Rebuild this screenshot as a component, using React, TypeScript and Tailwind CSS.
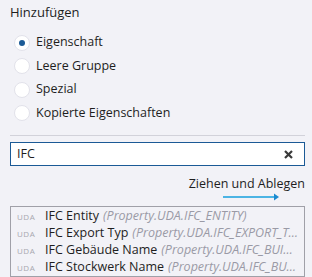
import { useState } from 'react';

const options = ['Eigenschaft', 'Leere Gruppe', 'Spezial', 'Kopierte Eigenschaften'];

const items = [
  { name: 'IFC Entity', path: '(Property.UDA.IFC_ENTITY)' },
  { name: 'IFC Export Typ', path: '(Property.UDA.IFC_EXPORT_TYPE)' },
  { name: 'IFC Gebäude Name', path: '(Property.UDA.IFC_BUILDING_NAME)' },
  { name: 'IFC Stockwerk Name', path: '(Property.UDA.IFC_BUILDING_STOREY)' },
];

export default function App() {
  const [selected, setSelected] = useState(0);
  const [query, setQuery] = useState('IFC');

  return (
    <div
      className="h-[277px] w-[312px] overflow-hidden bg-[#f2f2f7] pl-[10px] pr-[7px] pt-[3px] text-[#1e1e1e]"
      style={{ fontFamily: '"Open Sans", "Noto Sans", sans-serif' }}
    >
      <div className="text-[13px] leading-[18px]">Hinzufügen</div>

      <div className="mt-[10px] flex flex-col">
        {options.map((label, i) => (
          <label key={label} className="flex h-[23.5px] cursor-pointer items-center gap-[6px] pl-[4px]">
            <span
              className="flex h-[16px] w-[16px] items-center justify-center rounded-full border border-[#e2e2ea] bg-white"
              onClick={() => setSelected(i)}
            >
              {selected === i && <span className="h-[6px] w-[6px] rounded-full bg-[#1b5a96]" />}
            </span>
            <span className="text-[12.5px]">{label}</span>
          </label>
        ))}
      </div>

      <div className="mt-[10px] h-px bg-[#d2d2da]" />

      <div className="mt-[6px] flex h-[24px] items-center border border-[#1b5a96] bg-white pl-[6px] pr-[11px]">
        <input
          value={query}
          onChange={(e) => setQuery(e.target.value)}
          className="min-w-0 flex-1 bg-transparent text-[12.5px] text-[#1e1e1e] outline-none"
        />
        <svg width="9" height="9" viewBox="0 0 9 9" className="shrink-0">
          <path d="M1 1 L8 8 M8 1 L1 8" stroke="#3a3a3a" strokeWidth="2.2" />
        </svg>
      </div>

      <div className="mt-[10px] flex flex-col items-end">
        <span className="text-[12.5px] leading-[16px]">Ziehen und Ablegen</span>
        <svg width="56" height="8" viewBox="0 0 56 8" className="mr-[26px] mt-[1px]">
          <path d="M0 4 H51" stroke="#4cb4e4" strokeWidth="2" />
          <path d="M51 0.5 L56 4 L51 7.5 Z" fill="#1b8ad0" />
        </svg>
      </div>

      <div className="mt-[5px] border border-[#a0a0a8] px-[6px] pt-[1px]">
        {items.map((it) => (
          <div key={it.name} className="flex h-[17px] items-center whitespace-nowrap">
            <span className="w-[28px] shrink-0 text-[8px] tracking-[0.5px] text-[#a8a8b0]">UDA</span>
            <span className="text-[12.5px]">{it.name}</span>
            <span className="ml-[4px] truncate text-[12.5px] italic text-[#9a9aa6]">{it.path}</span>
          </div>
        ))}
      </div>
    </div>
  );
}
